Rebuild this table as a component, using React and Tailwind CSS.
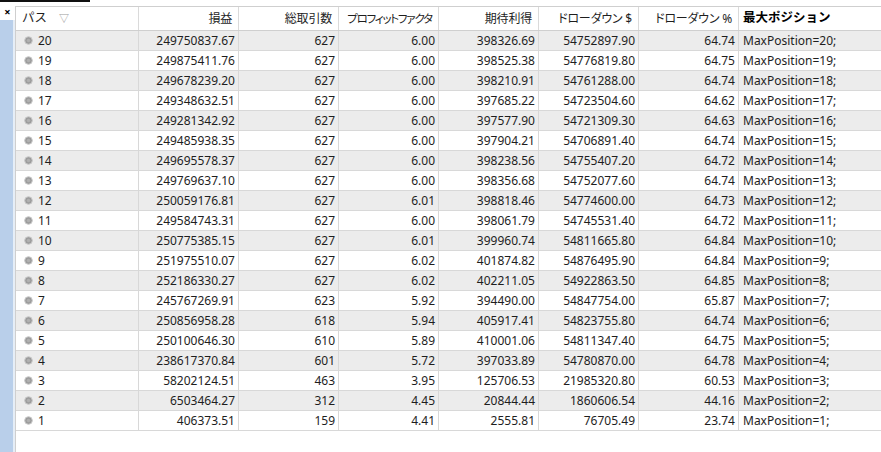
import React from "react";

const rows = [
  [20, "249750837.67", 627, "6.00", "398326.69", "54752897.90", "64.74"],
  [19, "249875411.76", 627, "6.00", "398525.38", "54776819.80", "64.75"],
  [18, "249678239.20", 627, "6.00", "398210.91", "54761288.00", "64.74"],
  [17, "249348632.51", 627, "6.00", "397685.22", "54723504.60", "64.62"],
  [16, "249281342.92", 627, "6.00", "397577.90", "54721309.30", "64.63"],
  [15, "249485938.35", 627, "6.00", "397904.21", "54706891.40", "64.74"],
  [14, "249695578.37", 627, "6.00", "398238.56", "54755407.20", "64.72"],
  [13, "249769637.10", 627, "6.00", "398356.68", "54752077.60", "64.74"],
  [12, "250059176.81", 627, "6.01", "398818.46", "54774600.00", "64.73"],
  [11, "249584743.31", 627, "6.00", "398061.79", "54745531.40", "64.72"],
  [10, "250775385.15", 627, "6.01", "399960.74", "54811665.80", "64.84"],
  [9, "251975510.07", 627, "6.02", "401874.82", "54876495.90", "64.84"],
  [8, "252186330.27", 627, "6.02", "402211.05", "54922863.50", "64.85"],
  [7, "245767269.91", 623, "5.92", "394490.00", "54847754.00", "65.87"],
  [6, "250856958.28", 618, "5.94", "405917.41", "54823755.80", "64.74"],
  [5, "250100646.30", 610, "5.89", "410001.06", "54811347.40", "64.75"],
  [4, "238617370.84", 601, "5.72", "397033.89", "54780870.00", "64.78"],
  [3, "58202124.51", 463, "3.95", "125706.53", "21985320.80", "60.53"],
  [2, "6503464.27", 312, "4.45", "20844.44", "1860606.54", "44.16"],
  [1, "406373.51", 159, "4.41", "2555.81", "76705.49", "23.74"],
];

const font = { fontFamily: '"Noto Sans", "Noto Sans CJK JP", sans-serif' };

const headers = ["損益", "総取引数", "プロフィットファクタ", "期待利得", "ドローダウン $", "ドローダウン %"];

function Dot() {
  return (
    <svg width="9" height="9" viewBox="0 0 9 9" className="shrink-0">
      <circle cx="4.5" cy="4.5" r="3.8" fill="#9c9c9c" stroke="#c8c8c8" strokeWidth="1" />
      <circle cx="4.5" cy="4.5" r="1.8" fill="#b0b0b0" />
    </svg>
  );
}

export default function App() {
  return (
    <div className="w-[881px] h-[452px] bg-white overflow-hidden text-[#1e1e1e]" style={font}>
      <div className="h-[6px] flex">
        <div className="w-[90px] h-[2px] border-b-[2px] border-r-[1px] border-[#111]"></div>
      </div>
      <div className="flex h-[446px]">
        <div className="w-[15px] flex flex-col shrink-0">
          <div className="h-[14px] flex items-start justify-center text-[11px] font-bold leading-[12px] text-black">×</div>
          <div className="flex-1 flex">
            <div className="w-[13px] bg-[#b9cfea]"></div>
            <div className="w-[2px] bg-[#e6eef7]"></div>
          </div>
        </div>
        <div className="flex-1 border-l border-t border-[#cfcfcf] flex flex-col">
          <div className="flex h-[24px] border-b border-[#cfcfcf] text-[12px] items-center">
            <div className="w-[123px] h-full border-r border-[#dadada] flex items-center pl-[6px] gap-[12px]">
              <span className="text-[12.5px]">パス</span>
              <span className="text-[10px] text-[#9a9a9a]">▽</span>
            </div>
            {headers.map((h, i) => (
              <div
                key={h}
                className={`w-[100px] h-full border-r border-[#dadada] flex items-center justify-end pr-[6px] whitespace-nowrap [font-feature-settings:'palt'] ${i === 2 ? "text-[11.5px] tracking-[-1.2px]" : "text-[12px] tracking-[-0.2px]"}`}
              >
                {h}
              </div>
            ))}
            <div className="flex-1 h-full flex items-center pl-[4px] font-bold text-[12.5px] text-black whitespace-nowrap">最大ポジション</div>
          </div>
          {rows.map((r, i) => (
            <div
              key={r[0]}
              className={`flex h-[20px] border-b border-[#d8d8d8] text-[12px] leading-[19px] ${i % 2 === 0 ? "bg-[#ececec]" : "bg-white"}`}
            >
              <div className="w-[123px] border-r border-[#d8d8d8] flex items-center pl-[8px] gap-[5px]">
                <Dot />
                <span>{r[0]}</span>
              </div>
              {r.slice(1).map((v, j) => (
                <div key={j} className="w-[100px] border-r border-[#d8d8d8] text-right pr-[3px]">
                  {v}
                </div>
              ))}
              <div className="flex-1 pl-[4px] whitespace-nowrap">MaxPosition={r[0]};</div>
            </div>
          ))}
        </div>
      </div>
    </div>
  );
}
